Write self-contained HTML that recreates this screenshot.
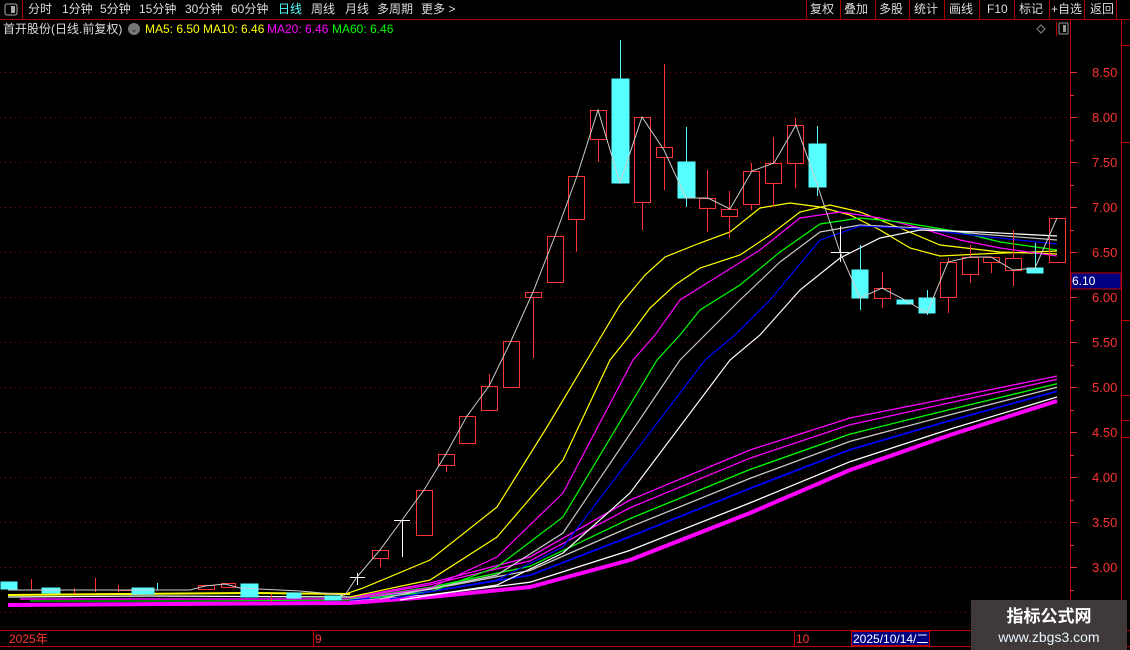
<!DOCTYPE html>
<html><head><meta charset="utf-8"><style>
body{margin:0;width:1130px;height:650px;background:#000;overflow:hidden;font-family:"Liberation Sans","Noto Sans CJK SC",sans-serif;}
.t{position:absolute;white-space:nowrap;font-size:12px;line-height:14px;}
</style></head><body>
<div style="position:relative;width:1130px;height:650px;">
<svg width="1130" height="650" style="position:absolute;left:0;top:0" font-family="Liberation Sans, Noto Sans CJK SC, sans-serif">
<line x1="0" y1="19.5" x2="1130" y2="19.5" stroke="#b00000"/>
<line x1="22.5" y1="0" x2="22.5" y2="19" stroke="#b00000"/>
<rect x="5" y="4" width="12" height="11" rx="2" fill="none" stroke="#aaa"/>
<rect x="11" y="6" width="4" height="7" fill="#aaa"/>
<g stroke="#b00000">
<line x1="806.5" y1="0" x2="806.5" y2="19"/><line x1="840.5" y1="0" x2="840.5" y2="19"/>
<line x1="875.5" y1="0" x2="875.5" y2="19"/><line x1="909.5" y1="0" x2="909.5" y2="19"/>
<line x1="944.5" y1="0" x2="944.5" y2="19"/><line x1="979.5" y1="0" x2="979.5" y2="19"/>
<line x1="1014.5" y1="0" x2="1014.5" y2="19"/><line x1="1049.5" y1="0" x2="1049.5" y2="19"/>
<line x1="1084.5" y1="0" x2="1084.5" y2="19"/><line x1="1116.5" y1="0" x2="1116.5" y2="19"/>
</g>
<line x1="1070.5" y1="20" x2="1070.5" y2="630" stroke="#c00000"/>
<line x1="1121.5" y1="20" x2="1121.5" y2="650" stroke="#c00000"/>
<g stroke="#c00000">
<line x1="1121" y1="45.5" x2="1130" y2="45.5"/><line x1="1121" y1="142.5" x2="1130" y2="142.5"/>
<line x1="1121" y1="320.5" x2="1130" y2="320.5"/><line x1="1121" y1="395.5" x2="1130" y2="395.5"/>
<line x1="1121" y1="420.5" x2="1130" y2="420.5"/><line x1="1121" y1="437.5" x2="1130" y2="437.5"/>
</g>
<g stroke="#e03030">
<line x1="1070" y1="72.5" x2="1077" y2="72.5"/><line x1="1070" y1="117.5" x2="1077" y2="117.5"/>
<line x1="1070" y1="162.5" x2="1077" y2="162.5"/><line x1="1070" y1="207.5" x2="1077" y2="207.5"/>
<line x1="1070" y1="252.5" x2="1077" y2="252.5"/><line x1="1070" y1="297.5" x2="1077" y2="297.5"/>
<line x1="1070" y1="342.5" x2="1077" y2="342.5"/><line x1="1070" y1="387.5" x2="1077" y2="387.5"/>
<line x1="1070" y1="432.5" x2="1077" y2="432.5"/><line x1="1070" y1="477.5" x2="1077" y2="477.5"/>
<line x1="1070" y1="522.5" x2="1077" y2="522.5"/><line x1="1070" y1="567.5" x2="1077" y2="567.5"/>
<line x1="1070" y1="95.5" x2="1074" y2="95.5"/><line x1="1070" y1="140.5" x2="1074" y2="140.5"/>
<line x1="1070" y1="185.5" x2="1074" y2="185.5"/><line x1="1070" y1="230.5" x2="1074" y2="230.5"/>
<line x1="1070" y1="320.5" x2="1074" y2="320.5"/><line x1="1070" y1="365.5" x2="1074" y2="365.5"/>
<line x1="1070" y1="410.5" x2="1074" y2="410.5"/><line x1="1070" y1="455.5" x2="1074" y2="455.5"/>
<line x1="1070" y1="500.5" x2="1074" y2="500.5"/><line x1="1070" y1="545.5" x2="1074" y2="545.5"/>
<line x1="1070" y1="590.5" x2="1074" y2="590.5"/>
</g>
<g fill="#ff3333" font-size="13">
<text x="1092" y="77">8.50</text><text x="1092" y="122">8.00</text><text x="1092" y="167">7.50</text>
<text x="1092" y="212">7.00</text><text x="1092" y="257">6.50</text><text x="1092" y="302">6.00</text>
<text x="1092" y="347">5.50</text><text x="1092" y="392">5.00</text><text x="1092" y="437">4.50</text>
<text x="1092" y="482">4.00</text><text x="1092" y="527">3.50</text><text x="1092" y="572">3.00</text>
</g>
<rect x="1071" y="273" width="50" height="16" fill="#000080" stroke="#c00000"/>
<text x="1072" y="285" fill="#fff" font-size="12">6.10</text>
<g stroke="#900000" stroke-dasharray="1 4">
<line x1="0" y1="72.5" x2="1068" y2="72.5"/><line x1="0" y1="117.5" x2="1068" y2="117.5"/>
<line x1="0" y1="162.5" x2="1068" y2="162.5"/><line x1="0" y1="207.5" x2="1068" y2="207.5"/>
<line x1="0" y1="252.5" x2="1068" y2="252.5"/><line x1="0" y1="297.5" x2="1068" y2="297.5"/>
<line x1="0" y1="342.5" x2="1068" y2="342.5"/><line x1="0" y1="387.5" x2="1068" y2="387.5"/>
<line x1="0" y1="432.5" x2="1068" y2="432.5"/><line x1="0" y1="477.5" x2="1068" y2="477.5"/>
<line x1="0" y1="522.5" x2="1068" y2="522.5"/><line x1="0" y1="567.5" x2="1068" y2="567.5"/>
<line x1="0" y1="612.5" x2="1068" y2="612.5"/>
</g>
<line x1="1056.5" y1="22" x2="1056.5" y2="36" stroke="#c00000"/>
<path d="M1041 25 L1045 29 L1041 33 L1037 29Z" fill="none" stroke="#888"/>
<rect x="1059" y="23" width="9" height="11" rx="1" fill="none" stroke="#999"/><rect x="1063" y="25" width="3" height="7" fill="#999"/>
<!-- lower MA bundle -->
<g fill="none" stroke-width="1.3">
<polyline stroke="#ff00ff" points="350,598 430,583 530,557 630,500 750,450 850,418 950,398 1057,376"/>
<polyline stroke="#ff00ff" points="350,598.5 430,584.8 530,560.9 630,507.8 750,458.2 850,424.8 950,402.8 1057,379.3"/>
<polyline stroke="#00ff00" points="350,599.2 430,587.3 530,566.3 630,518.6 750,469.5 850,434.1 950,409.5 1057,383.8"/>
<polyline stroke="#c8c8c8" points="350,599.8 430,589.3 530,570.5 630,527 750,478.4 850,441.4 950,414.7 1057,387.3"/>
<polyline stroke="#0000ff" stroke-width="1.8" points="350,600.4 430,591.5 530,575.3 630,536.6 750,488.4 850,449.7 950,420.6 1057,391.3"/>
<polyline stroke="#ffffff" points="350,601.4 430,594.8 530,582.2 630,550.4 750,502.9 850,461.7 950,429.1 1057,397"/>
<polyline stroke="#ff00ff" stroke-width="4" points="8,605 350,603 430,597 530,587 630,560 750,513 850,470 950,435 1057,401"/>
</g>
<g fill="none" stroke-width="2">
<polyline stroke="#ffff00" points="8,595 120,594 250,593 350,594"/>
<polyline stroke="#ffffff" stroke-width="1.2" points="8,597 150,596 350,597"/>
<polyline stroke="#ff00ff" stroke-width="1.5" points="20,599 200,599 350,599"/>
<polyline stroke="#00ff00" stroke-width="1" points="30,601 200,601 350,600"/>
</g>
<!-- upper MA bundle -->
<g fill="none" stroke-width="1.2">
<polyline stroke="#ffff00" points="340,596 363,588 430,560 497,507 547,427 587,360 620,305 645,275 665,257 700,243 730,232 760,208 790,203 820,207 850,215 880,230 910,248 940,256 980,254 1057,251"/>
<polyline stroke="#ffff00" points="350,597 430,580 497,537 563,460 610,360 630,335 650,308 675,285 700,268 740,255 770,235 800,212 830,205 860,212 900,228 940,245 1000,252 1057,254"/>
<polyline stroke="#ff00ff" points="360,598 430,588 497,557 563,493 633,360 655,335 680,300 720,275 760,250 800,218 840,212 880,218 920,228 960,240 1000,248 1057,256"/>
<polyline stroke="#00ff00" points="370,598 430,592 497,567 563,517 657,360 680,335 700,310 740,285 780,252 820,224 860,218 900,222 960,232 1000,242 1057,250"/>
<polyline stroke="#c8c8c8" points="380,599 497,575 563,533 680,360 705,335 740,300 780,262 820,232 860,225 920,228 980,234 1057,240"/>
<polyline stroke="#0000ff" points="390,599 497,580 563,547 705,360 735,335 770,300 820,240 860,226 920,229 980,236 1057,244"/>
<polyline stroke="#ffffff" points="400,600 497,585 563,553 630,493 730,360 760,335 800,290 840,258 880,238 920,230 980,232 1057,236"/>
</g>
<!-- candles -->
<g stroke="#ff3333" fill="none">
<line x1="31.5" y1="579" x2="31.5" y2="590"/><line x1="95.5" y1="578" x2="95.5" y2="592"/><line x1="74.5" y1="588" x2="74.5" y2="594"/>
<line x1="118.5" y1="585" x2="118.5" y2="592"/>
<rect x="198.5" y="585.5" width="16" height="4"/><rect x="221.5" y="583.5" width="14" height="4"/>
<line x1="118" y1="590.5" x2="135" y2="590.5"/><line x1="271.5" y1="594" x2="271.5" y2="602"/>
<rect x="372.5" y="550.5" width="16" height="8"/><line x1="380.5" y1="558" x2="380.5" y2="567"/>
<rect x="416.5" y="490.5" width="16" height="45"/>
<rect x="438.5" y="454.5" width="16" height="11"/><line x1="446.5" y1="465" x2="446.5" y2="472"/>
<rect x="459.5" y="416.5" width="16" height="27"/>
<rect x="481.5" y="386.5" width="16" height="24"/><line x1="489.5" y1="374" x2="489.5" y2="386"/>
<rect x="503.5" y="341.5" width="16" height="46"/>
<rect x="525.5" y="292.5" width="16" height="5"/><line x1="533.5" y1="297" x2="533.5" y2="358"/>
<rect x="547.5" y="236.5" width="16" height="46"/>
<rect x="568.5" y="176.5" width="16" height="43"/><line x1="576.5" y1="219" x2="576.5" y2="252"/>
<rect x="590.5" y="110.5" width="16" height="29"/><line x1="598.5" y1="139" x2="598.5" y2="162"/>
<rect x="634.5" y="117.5" width="16" height="85"/><line x1="642.5" y1="202" x2="642.5" y2="230"/>
<rect x="656.5" y="147.5" width="16" height="10"/><line x1="664.5" y1="64" x2="664.5" y2="147"/><line x1="664.5" y1="157" x2="664.5" y2="190"/>
<rect x="699.5" y="198.5" width="16" height="10"/><line x1="707.5" y1="170" x2="707.5" y2="198"/><line x1="707.5" y1="208" x2="707.5" y2="232"/>
<rect x="721.5" y="209.5" width="16" height="7"/><line x1="729.5" y1="191" x2="729.5" y2="209"/><line x1="729.5" y1="216" x2="729.5" y2="238"/>
<rect x="743.5" y="171.5" width="16" height="33"/><line x1="751.5" y1="163" x2="751.5" y2="171"/><line x1="751.5" y1="204" x2="751.5" y2="210"/>
<rect x="765.5" y="163.5" width="16" height="20"/><line x1="773.5" y1="137" x2="773.5" y2="163"/><line x1="773.5" y1="183" x2="773.5" y2="206"/>
<rect x="787.5" y="125.5" width="16" height="38"/><line x1="795.5" y1="118" x2="795.5" y2="125"/><line x1="795.5" y1="163" x2="795.5" y2="188"/>
<rect x="874.5" y="288.5" width="16" height="10"/><line x1="882.5" y1="272" x2="882.5" y2="288"/><line x1="882.5" y1="298" x2="882.5" y2="308"/>
<rect x="940.5" y="262.5" width="16" height="35"/><line x1="948.5" y1="258" x2="948.5" y2="262"/><line x1="948.5" y1="297" x2="948.5" y2="313"/>
<rect x="962.5" y="257.5" width="16" height="17"/><line x1="970.5" y1="245" x2="970.5" y2="257"/><line x1="970.5" y1="274" x2="970.5" y2="283"/>
<rect x="983.5" y="257.5" width="16" height="5"/><line x1="991.5" y1="262" x2="991.5" y2="273"/>
<rect x="1005.5" y="258.5" width="16" height="12"/><line x1="1013.5" y1="230" x2="1013.5" y2="258"/><line x1="1013.5" y1="270" x2="1013.5" y2="286"/>
<rect x="1049.5" y="218.5" width="16" height="44"/>
</g>
<g fill="#55ffff" stroke="#55ffff">
<rect x="1" y="582" width="16" height="7"/><rect x="42" y="588" width="18" height="5"/>
<rect x="132" y="588" width="22" height="6"/><line x1="157.5" y1="583" x2="157.5" y2="590"/>
<rect x="241" y="584" width="17" height="13"/><rect x="287" y="593" width="14" height="5"/>
<rect x="325" y="596" width="16" height="4"/>
<rect x="612" y="79" width="17" height="104"/><line x1="620.5" y1="40" x2="620.5" y2="79"/>
<rect x="678" y="162" width="17" height="36"/><line x1="686.5" y1="127" x2="686.5" y2="207"/>
<rect x="809" y="144" width="17" height="43"/><line x1="817.5" y1="126" x2="817.5" y2="196"/>
<rect x="852" y="270" width="16" height="28"/><line x1="860.5" y1="245" x2="860.5" y2="310"/>
<rect x="897" y="300" width="16" height="4"/>
<rect x="919" y="298" width="16" height="15"/><line x1="927.5" y1="290" x2="927.5" y2="315"/>
<rect x="1027" y="268" width="16" height="5"/><line x1="1035.5" y1="243" x2="1035.5" y2="268"/>
</g>
<g stroke="#fff">
<line x1="350" y1="577.5" x2="365" y2="577.5"/><line x1="357.5" y1="573" x2="357.5" y2="585"/>
<line x1="394" y1="520.5" x2="410" y2="520.5"/><line x1="402.5" y1="520" x2="402.5" y2="557"/>
<line x1="831" y1="252.5" x2="849" y2="252.5"/><line x1="840.5" y1="226" x2="840.5" y2="262"/>
</g>
<polyline fill="none" stroke="#cccccc" points="8,590 100,590 190,590 205,586 225,584 240,588 300,591 345,595 357,577 380,550 402,520 424,490 446,454 467,416 489,386 511,341 533,292 555,236 577,176 598,110 620,183 642,117 664,150 686,198 708,198 730,209 752,171 774,163 796,125 818,187 840,252 860,298 882,288 905,300 927,313 948,262 970,257 991,257 1013,270 1035,268 1057,218"/>
<line x1="0" y1="630.5" x2="1130" y2="630.5" stroke="#c00000"/>
<line x1="0" y1="646.5" x2="1130" y2="646.5" stroke="#c00000"/>
<line x1="313.5" y1="631" x2="313.5" y2="646" stroke="#c00000"/>
<line x1="794.5" y1="631" x2="794.5" y2="646" stroke="#c00000"/>
<text x="9" y="643" fill="#ff3333" font-size="12">2025年</text>
<text x="315" y="643" fill="#ff3333" font-size="12">9</text>
<text x="796" y="643" fill="#ff3333" font-size="12">10</text>
<rect x="851.5" y="631.5" width="78" height="14" fill="#000080" stroke="#c00000"/>
<text x="853" y="643" fill="#fff" font-size="12">2025/10/14/二</text>
<rect x="971" y="600" width="156" height="50" fill="#3f3a39"/>
<text x="1049" y="622" fill="#fff" font-size="17" font-weight="bold" text-anchor="middle">指标公式网</text>
<text x="1049" y="642" fill="#e8f4ff" font-size="14" text-anchor="middle">www.zbgs3.com</text>
</svg>
<div class="t" style="left:28px;top:2px;color:#ddd;">分时</div>
<div class="t" style="left:62px;top:2px;color:#ddd;">1分钟</div>
<div class="t" style="left:100px;top:2px;color:#ddd;">5分钟</div>
<div class="t" style="left:139px;top:2px;color:#ddd;">15分钟</div>
<div class="t" style="left:185px;top:2px;color:#ddd;">30分钟</div>
<div class="t" style="left:231px;top:2px;color:#ddd;">60分钟</div>
<div class="t" style="left:278px;top:2px;color:#55ffff;">日线</div>
<div class="t" style="left:311px;top:2px;color:#ddd;">周线</div>
<div class="t" style="left:345px;top:2px;color:#ddd;">月线</div>
<div class="t" style="left:377px;top:2px;color:#ddd;">多周期</div>
<div class="t" style="left:421px;top:2px;color:#ddd;">更多 &gt;</div>
<div class="t" style="left:810px;top:2px;color:#ddd;">复权</div>
<div class="t" style="left:844px;top:2px;color:#ddd;">叠加</div>
<div class="t" style="left:879px;top:2px;color:#ddd;">多股</div>
<div class="t" style="left:914px;top:2px;color:#ddd;">统计</div>
<div class="t" style="left:949px;top:2px;color:#ddd;">画线</div>
<div class="t" style="left:987px;top:2px;color:#ddd;">F10</div>
<div class="t" style="left:1019px;top:2px;color:#ddd;">标记</div>
<div class="t" style="left:1051px;top:2px;color:#ddd;">+自选</div>
<div class="t" style="left:1090px;top:2px;color:#ddd;">返回</div>
<div class="t" style="left:3px;top:22px;color:#ddd;">首开股份(日线.前复权)</div>
<div style="position:absolute;left:128px;top:23px;width:12px;height:12px;border-radius:6px;background:#777;color:#222;font-size:9px;line-height:12px;text-align:center;">⌄</div>
<div class="t" style="left:145px;top:22px;color:#ffff00;">MA5: 6.50</div>
<div class="t" style="left:203px;top:22px;color:#ffff00;">MA10: 6.46</div>
<div class="t" style="left:267px;top:22px;color:#ff00ff;">MA20: 6.46</div>
<div class="t" style="left:332px;top:22px;color:#00ff00;">MA60: 6.46</div>
</div>
</body></html>
